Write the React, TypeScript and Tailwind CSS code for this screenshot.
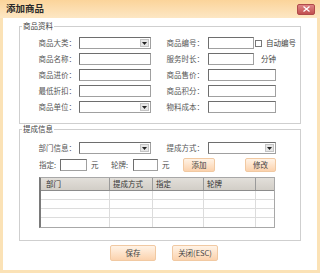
import React from "react";

const labelCls = "text-right text-[#555] leading-[12px] whitespace-nowrap";

function Box({ w }: { w: string }) {
  return <div className={`h-[12px] ${w} border border-[#a0a0a0] border-t-[#6e6e6e] border-l-[#6e6e6e] bg-white`} />;
}

function Select({ w }: { w: string }) {
  return (
    <div className={`h-[12px] ${w} flex justify-end p-px border border-[#a0a0a0] border-t-[#6e6e6e] border-l-[#6e6e6e] bg-white`}>
      <div className="w-[9px] flex items-center justify-center bg-[#e6e6e6] border border-[#c4c4c4]">
        <svg width="5" height="3" viewBox="0 0 5 3">
          <path d="M0 0h5L2.5 3z" fill="#222" />
        </svg>
      </div>
    </div>
  );
}

function Btn({ w, children }: { w: string; children: React.ReactNode }) {
  return (
    <div className={`${w} h-full flex items-center justify-center whitespace-nowrap rounded-[2px] border border-[#f1c9a2] bg-gradient-to-b from-[#fff3e6] to-[#fbd2ad] text-[#444]`}>
      {children}
    </div>
  );
}

const fields: [string, React.ReactNode, string, React.ReactNode][] = [
  ["商品大类：", <Select w="w-[72px]" />, "商品编号：", (
    <div className="flex items-center">
      <Box w="w-[46px]" />
      <div className="ml-[1px] w-[7px] h-[7px] border border-[#777] bg-white" />
      <span className="ml-[4px] text-[#444]">自动编号</span>
    </div>
  )],
  ["商品名称：", <Box w="w-[72px]" />, "服务时长：", (
    <div className="flex items-center">
      <Box w="w-[46px]" />
      <span className="ml-[7px] text-[#444]">分钟</span>
    </div>
  )],
  ["商品进价：", <Box w="w-[72px]" />, "商品售价：", <Box w="w-[68px]" />],
  ["最低折扣：", <Box w="w-[72px]" />, "商品积分：", <Box w="w-[68px]" />],
  ["商品单位：", <Select w="w-[72px]" />, "物料成本：", <Box w="w-[68px]" />],
];

export default function App() {
  return (
    <div className="w-[320px] h-[273px] flex flex-col bg-[#fbe2b6] font-['Noto_Sans_CJK_SC','Noto_Sans',sans-serif] text-[7.5px] overflow-hidden">
      {/* Title bar */}
      <div className="h-[18px] shrink-0 flex items-center justify-between pl-[6px] pr-[5px] bg-gradient-to-b from-[#fbd49a] to-[#fde7c4]">
        <span className="text-[9.5px] font-bold text-[#2a2a2a] leading-none">添加商品</span>
        <div className="w-[18px] h-[11px] flex items-center justify-center rounded-[2px] border border-[#b04a4a] bg-gradient-to-b from-[#de8585] to-[#c24f4f]">
          <svg width="7" height="6" viewBox="0 0 7 6">
            <path d="M0.5 0.5l6 5M6.5 0.5l-6 5" stroke="#fff" strokeWidth="1.2" />
          </svg>
        </div>
      </div>

      {/* Body */}
      <div className="flex-1 mx-[3px] mb-[3px] bg-white flex flex-col px-[16px]">
        <fieldset className="mt-[3px] border border-[#cfcfcf] pt-[4px] pb-[8px]">
          <legend className="ml-[2px] px-px text-[#444] leading-[10px]">商品资料</legend>
          {fields.map(([l1, c1, l2, c2]) => (
            <div key={l1} className="h-[16px] flex items-center">
              <span className={`w-[56px] ${labelCls}`}>{l1}</span>
              <div className="ml-[3px]">{c1}</div>
              <span className={`w-[53px] ${labelCls}`}>{l2}</span>
              <div className="ml-[4px]">{c2}</div>
            </div>
          ))}
        </fieldset>

        <fieldset className="border border-[#cfcfcf] pt-[6px] pb-[12px]">
          <legend className="ml-[2px] px-px text-[#444] leading-[10px]">提成信息</legend>
          <div className="h-[16px] flex items-center">
            <span className={`w-[56px] ${labelCls}`}>部门信息：</span>
            <div className="ml-[3px]"><Select w="w-[72px]" /></div>
            <span className={`w-[53px] ${labelCls}`}>提成方式：</span>
            <div className="ml-[4px]"><Select w="w-[68px]" /></div>
          </div>
          <div className="h-[16px] mt-px flex items-center pl-[19px] py-px whitespace-nowrap">
            <span className="w-[20px] text-[#555]">指定:</span>
            <div className="ml-[1px]"><Box w="w-[27px]" /></div>
            <span className="ml-[4px] w-[8px] text-[#444]">元</span>
            <span className="ml-[12px] w-[20px] text-[#555]">轮牌:</span>
            <div className="ml-[2px]"><Box w="w-[25px]" /></div>
            <span className="ml-[4px] w-[8px] text-[#444]">元</span>
            <div className="ml-[13px] h-full"><Btn w="w-[32px]">添加</Btn></div>
            <div className="ml-[30px] h-full"><Btn w="w-[31px]">修改</Btn></div>
          </div>
          <div className="mt-[4px] ml-[19px] w-[236px] border border-[#a8a8a8] border-l-[#7a7a7a] border-l-2">
            <div className="h-[13px] flex bg-gradient-to-b from-[#e2dfda] to-[#d2cec7] border-b border-[#8c8c8c] text-[#333]">
              <div className="w-[69px] pl-[5px] flex items-center border-r border-[#9a9a9a]">部门</div>
              <div className="w-[43px] pl-[3px] flex items-center border-r border-[#9a9a9a]">提成方式</div>
              <div className="w-[51px] pl-[3px] flex items-center border-r border-[#9a9a9a]">指定</div>
              <div className="w-[52px] pl-[3px] flex items-center border-r border-[#9a9a9a]">轮牌</div>
              <div className="flex-1" />
            </div>
            {[0, 1, 2, 3].map((i) => (
              <div key={i} className="h-[9px] flex border-b border-[#dcdcdc] last:border-b-0">
                <div className="w-[69px] border-r border-[#dcdcdc]" />
                <div className="w-[43px] border-r border-[#dcdcdc]" />
                <div className="w-[51px] border-r border-[#dcdcdc]" />
                <div className="w-[52px] border-r border-[#dcdcdc]" />
                <div className="flex-1" />
              </div>
            ))}
          </div>
        </fieldset>

        <div className="mt-[4px] h-[16px] flex pl-[91px]">
          <Btn w="w-[46px]">保存</Btn>
          <div className="ml-[16px] h-full"><Btn w="w-[46px]">关闭(ESC)</Btn></div>
        </div>
      </div>
    </div>
  );
}
